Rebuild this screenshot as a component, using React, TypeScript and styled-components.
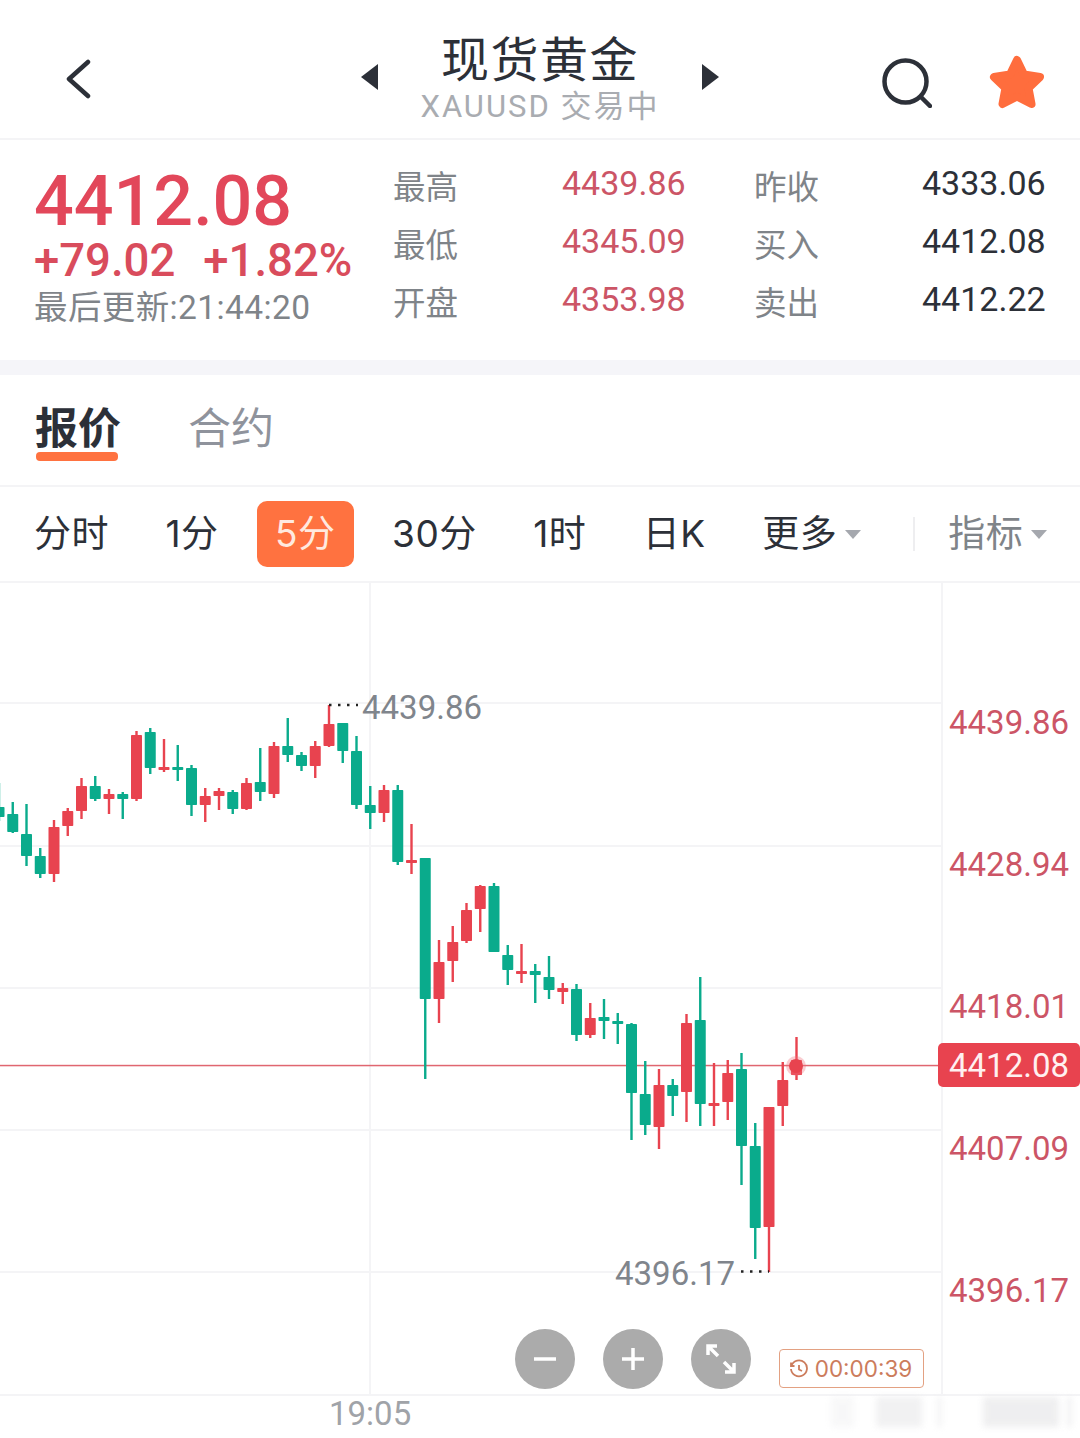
import React from 'react';
import styled, { createGlobalStyle } from 'styled-components';

const RED = '#e8434f';
const GREEN = '#0aab8c';
const ORANGE = '#ff7240';
const LINE = '#f4f4f6';
const FONT = `Roboto, "Noto Sans CJK SC", sans-serif`;
const ROUND_FONT = `Inter, "Noto Sans CJK SC", sans-serif`;

const STEP = 13.75;

// color, wick top, wick bottom, body top, body bottom (page y)
const candles: [string, number, number, number, number][] = [
	['g', 783, 821, 807, 817],
	['g', 802, 833, 814, 832],
	['g', 804, 866, 834, 856],
	['g', 848, 878, 856, 874],
	['r', 820, 882, 827, 874],
	['r', 808, 836, 811, 826],
	['r', 778, 819, 786, 811],
	['g', 776, 801, 786, 799],
	['r', 789, 814, 794, 799],
	['g', 792, 819, 794, 799],
	['r', 731, 801, 735, 799],
	['g', 728, 774, 732, 768],
	['r', 739, 772, 767, 770],
	['g', 745, 781, 767, 770],
	['g', 765, 816, 768, 805],
	['r', 788, 822, 796, 805],
	['r', 788, 810, 791, 796],
	['g', 790, 814, 792, 809],
	['r', 778, 810, 783, 809],
	['g', 748, 801, 782, 792],
	['r', 742, 798, 746, 794],
	['g', 718, 762, 746, 755],
	['g', 752, 771, 755, 766],
	['r', 741, 778, 746, 766],
	['r', 705, 747, 724, 746],
	['g', 723, 763, 723, 751],
	['g', 736, 809, 751, 805],
	['g', 786, 829, 805, 813],
	['r', 785, 822, 790, 813],
	['g', 785, 865, 790, 862],
	['r', 824, 874, 860, 863],
	['g', 858, 1079, 858, 999],
	['r', 940, 1023, 962, 999],
	['r', 926, 982, 942, 961],
	['r', 903, 943, 910, 941],
	['r', 885, 932, 886, 909],
	['g', 883, 952, 886, 952],
	['g', 945, 985, 955, 970],
	['r', 944, 983, 971, 973],
	['g', 964, 1003, 971, 975],
	['g', 956, 999, 977, 990],
	['r', 983, 1004, 988, 992],
	['g', 984, 1041, 989, 1035],
	['r', 1003, 1038, 1018, 1035],
	['g', 999, 1039, 1017, 1021],
	['g', 1013, 1044, 1021, 1024],
	['g', 1023, 1140, 1024, 1093],
	['g', 1061, 1135, 1094, 1125],
	['r', 1069, 1149, 1085, 1127],
	['g', 1079, 1116, 1085, 1096],
	['r', 1014, 1122, 1023, 1092],
	['g', 977, 1126, 1020, 1104],
	['r', 1063, 1126, 1103, 1106],
	['r', 1060, 1120, 1073, 1102],
	['g', 1053, 1185, 1069, 1146],
	['g', 1123, 1259, 1146, 1228],
	['r', 1107, 1272, 1107, 1227],
	['r', 1062, 1126, 1080, 1106],
	['r', 1037, 1080, 1060, 1075],
];

const gridRows = [703, 846, 988, 1130, 1272];
const axisPrices = ['4439.86', '4428.94', '4418.01', '4407.09', '4396.17'];

const stats = [
	['最高', '4439.86', '昨收', '4333.06'],
	['最低', '4345.09', '买入', '4412.08'],
	['开盘', '4353.98', '卖出', '4412.22'],
];

const periods = ['分时', '1分', '5分', '30分', '1时', '日K'];

const smudges = [
	{ w: 23, gap: 0, o: 0.3 },
	{ w: 46, gap: 22, o: 0.6 },
	{ w: 5, gap: 15, o: 0.5 },
	{ w: 76, gap: 41, o: 0.7 },
	{ w: 5, gap: 8, o: 0.6 },
];

const Caret = () => (
	<CaretIcon viewBox="0 0 16 10">
		<path d="M0 1h16L8 10z" fill="#a5a8ae" />
	</CaretIcon>
);

const Chart = () => (
	<ChartSvg viewBox="0 583 941 811">
		{gridRows.map((y) => (
			<line key={y} x1={0} x2={941} y1={y} y2={y} stroke={LINE} strokeWidth={2} />
		))}
		<line x1={370} x2={370} y1={583} y2={1394} stroke={LINE} strokeWidth={2} />
		<rect x={0} y={1064.8} width={941} height={1.5} fill="#e06670" />
		{candles.map(([c, wt, wb, bt, bb], i) => {
			const x = -1 + i * STEP;
			const fill = c === 'r' ? RED : GREEN;
			return (
				<g key={i} fill={fill}>
					<rect x={x - 1.2} y={wt} width={2.4} height={wb - wt} />
					<rect x={x - 5.5} y={bt} width={11} height={Math.max(bb - bt, 3)} rx={0.8} />
				</g>
			);
		})}
		<circle cx={796} cy={1066} r={10} fill="#f2707a" opacity={0.35} />
		<circle cx={796} cy={1066} r={7} fill={RED} />
		<line x1={329} x2={358} y1={705} y2={705} stroke="#222" strokeWidth={2.5} strokeDasharray="2.500 6.500" />
		<line x1={741} x2={769} y1={1271.5} y2={1271.5} stroke="#222" strokeWidth={2.5} strokeDasharray="2.500 6.500" />
	</ChartSvg>
);

export default function App() {
	return (
		<Page>
			<GlobalStyle />
			<Header>
				<BackIcon viewBox="0 0 26 40">
					<path d="M23 3 4 20l19 17" />
				</BackIcon>
				<TitleGroup>
					<Arrow viewBox="0 0 17 26">
						<path d="M17 0v26L0 13z" fill="#2c3038" />
					</Arrow>
					<Titles>
						<Title>现货黄金</Title>
						<Subtitle>XAUUSD 交易中</Subtitle>
					</Titles>
					<Arrow viewBox="0 0 17 26">
						<path d="M0 0v26l17-13z" fill="#2c3038" />
					</Arrow>
				</TitleGroup>
				<HeaderIcons>
					<SearchIcon viewBox="0 0 50 50">
						<circle cx="23.5" cy="23.5" r="21" />
						<path d="m39 39 9 9" />
					</SearchIcon>
					<StarIcon viewBox="0 0 56 54">
						<path d="M28 5l7 14.500 16 2.500-11.500 11 3 16L28 41.500 13.500 49l3-16L5 22l16-2.500z" />
					</StarIcon>
				</HeaderIcons>
			</Header>

			<StatsRow>
				<Quote>
					<Price>4412.08</Price>
					<Change>
						<span>+79.02</span>
						<span>+1.82%</span>
					</Change>
					<Updated>最后更新:21:44:20</Updated>
				</Quote>
				<StatsGrid>
					{stats.map(([a, b, c, d]) => (
						<React.Fragment key={a}>
							<StatLabel>{a}</StatLabel>
							<StatValue $red>{b}</StatValue>
							<StatLabel>{c}</StatLabel>
							<StatValue>{d}</StatValue>
						</React.Fragment>
					))}
				</StatsGrid>
			</StatsRow>
			<Band />

			<Tabs>
				<Tab $active>报价</Tab>
				<Tab>合约</Tab>
			</Tabs>

			<Periods>
				{periods.map((p) => (
					<Period key={p} $active={p === '5分'}>
						{p}
					</Period>
				))}
				<Period>
					更多
					<Caret />
				</Period>
				<Separator />
				<Period $muted>
					指标
					<Caret />
				</Period>
			</Periods>

			<ChartArea>
				<Plot>
					<Chart />
					<PeakLabel $x={362} $y={687}>4439.86</PeakLabel>
					<PeakLabel $x={615} $y={1253}>4396.17</PeakLabel>
					<Controls>
						<RoundButton>
							<svg width="26" height="26" viewBox="0 0 26 26">
								<path d="M2 13h22" />
							</svg>
						</RoundButton>
						<RoundButton>
							<svg width="26" height="26" viewBox="0 0 26 26">
								<path d="M2 13h22M13 2v22" />
							</svg>
						</RoundButton>
						<RoundButton>
							<svg width="32" height="32" viewBox="0 0 32 32">
								<path d="M4 4l9 9M19 19l9 9M3 12V3h9M29 20v9h-9" />
							</svg>
						</RoundButton>
					</Controls>
					<Countdown>
						<svg width="20" height="20" viewBox="0 0 20 20">
							<path d="M2.500 6.500A8 8 0 1 1 2 10M2 3.500v3.500h3.500M10 6v4.500l3 1.500" />
						</svg>
						00:00:39
					</Countdown>
				</Plot>
				<Axis>
					{axisPrices.map((p) => (
						<AxisLabel key={p}>{p}</AxisLabel>
					))}
					<PriceTag>4412.08</PriceTag>
				</Axis>
			</ChartArea>

			<Footer>
				<TimeLabel>19:05</TimeLabel>
				<Watermark>
					{smudges.map((s, i) => (
						<Smudge key={i} style={{ width: s.w, marginLeft: s.gap, opacity: s.o }} />
					))}
				</Watermark>
			</Footer>
		</Page>
	);
}

const GlobalStyle = createGlobalStyle`
	html, body {
		margin: 0;
		padding: 0;
		background: #fff;
	}
`;

const Page = styled.div`
	width: 1080px;
	height: 1438px;
	overflow: hidden;
	display: flex;
	flex-direction: column;
	background: #fff;
	font-family: ${FONT};
	color: #2c3038;
`;

const Header = styled.header`
	height: 138px;
	flex: none;
	position: relative;
	display: flex;
	align-items: center;
	justify-content: center;
	border-bottom: 2px solid ${LINE};
`;

const BackIcon = styled.svg`
	position: absolute;
	left: 65px;
	top: 59px;
	width: 26px;
	height: 40px;
	fill: none;
	stroke: #2c3038;
	stroke-width: 4.500;
	stroke-linecap: round;
	stroke-linejoin: round;
`;

const TitleGroup = styled.div`
	display: flex;
	align-items: center;
	gap: 21px;
`;

const Arrow = styled.svg`
	width: 17px;
	height: 26px;
	margin-top: 16px;
`;

const Titles = styled.div`
	width: 282px;
	display: flex;
	flex-direction: column;
	align-items: center;
	padding-top: 16px;
`;

const Title = styled.div`
	font-size: 48px;
	line-height: 60px;
	letter-spacing: 1.500px;
`;

const Subtitle = styled.div`
	font-size: 31px;
	line-height: 34px;
	letter-spacing: 2px;
	margin-top: -1px;
	color: #a9acb1;
`;

const HeaderIcons = styled.div`
	position: absolute;
	left: 882px;
	top: 55px;
	display: flex;
	align-items: flex-start;
	gap: 56px;
`;

const SearchIcon = styled.svg`
	width: 50px;
	height: 50px;
	margin-top: 3px;
	fill: none;
	stroke: #2c3038;
	stroke-width: 4.500;
	stroke-linecap: round;
`;

const StarIcon = styled.svg`
	width: 56px;
	height: 54px;
	margin-left: 1px;
	fill: #ff6d3d;
	stroke: #ff6d3d;
	stroke-width: 8;
	stroke-linejoin: round;
`;

const StatsRow = styled.section`
	height: 220px;
	flex: none;
	display: flex;
`;

const Quote = styled.div`
	width: 393px;
	flex: none;
	padding: 25px 0 0 34px;
	box-sizing: border-box;
	display: flex;
	flex-direction: column;
`;

const Price = styled.div`
	font-size: 70px;
	line-height: 72px;
	font-weight: 500;
	color: #e2475a;
`;

const Change = styled.div`
	display: flex;
	gap: 28px;
	margin-top: 1px;
	font-size: 45.500px;
	line-height: 46px;
	font-weight: 500;
	color: #d94c5c;
`;

const Updated = styled.div`
	font-size: 33.500px;
	line-height: 46px;
	letter-spacing: 0.400px;
	margin-top: 1px;
	color: #7f8489;
	white-space: nowrap;
`;

const StatsGrid = styled.div`
	display: grid;
	grid-template-columns: 169px 192px 168px auto;
	grid-auto-rows: 58px;
	padding-top: 15px;
	align-items: center;
`;

const StatLabel = styled.div`
	font-size: 32.500px;
	color: #7f8489;
`;

const StatValue = styled.div<{ $red?: boolean }>`
	font-size: 34px;
	margin-top: -3px;
	color: ${({ $red }) => ($red ? '#cc5566' : '#2c3038')};
`;

const Band = styled.div`
	height: 15px;
	flex: none;
	background: #f5f5f9;
`;

const Tabs = styled.nav`
	height: 112px;
	flex: none;
	box-sizing: border-box;
	padding: 24px 0 0 35px;
	display: flex;
	align-items: flex-start;
	gap: 67px;
	border-bottom: 2px solid ${LINE};
`;

const Tab = styled.div<{ $active?: boolean }>`
	font-size: 43px;
	line-height: 60px;
	font-weight: ${({ $active }) => ($active ? 700 : 400)};
	color: ${({ $active }) => ($active ? '#2c3038' : '#8f939c')};
	display: flex;
	flex-direction: column;
	&::after {
		content: '';
		display: ${({ $active }) => ($active ? 'block' : 'none')};
		height: 9px;
		margin: -7px 3px 0 1px;
		border-radius: 4px;
		background: ${ORANGE};
	}
`;

const Periods = styled.div`
	height: 96px;
	flex: none;
	box-sizing: border-box;
	padding-left: 34px;
	display: flex;
	align-items: center;
	gap: 56.500px;
	border-bottom: 2px solid ${LINE};
	font-family: ${ROUND_FONT};
`;

const Period = styled.div<{ $active?: boolean; $muted?: boolean }>`
	font-size: 37px;
	line-height: 66px;
	letter-spacing: 0.500px;
	display: flex;
	align-items: center;
	white-space: nowrap;
	color: ${({ $muted }) => ($muted ? '#7f8489' : '#2c3038')};
	${({ $active }) =>
		$active &&
		`
		margin: 0 -18px;
		padding: 0 18px;
		border-radius: 10px;
		background: ${ORANGE};
		color: #ffe9df;
	`}
`;

const CaretIcon = styled.svg`
	width: 16px;
	height: 10px;
	margin-left: 8px;
`;

const Separator = styled.div`
	width: 2px;
	height: 34px;
	margin: 0 -23px 0 -5px;
	background: #eeeef0;
`;

const ChartArea = styled.div`
	height: 811px;
	flex: none;
	display: flex;
	border-bottom: 2px solid ${LINE};
`;

const Plot = styled.div`
	width: 941px;
	flex: none;
	position: relative;
	border-right: 2px solid ${LINE};
`;

const ChartSvg = styled.svg`
	display: block;
	width: 941px;
	height: 811px;
`;

const PeakLabel = styled.div<{ $x: number; $y: number }>`
	position: absolute;
	left: ${({ $x }) => $x}px;
	top: ${({ $y }) => $y - 583}px;
	font-size: 33px;
	line-height: 42px;
	color: #80858c;
`;

const Controls = styled.div`
	position: absolute;
	left: 515px;
	top: 746px;
	display: flex;
	gap: 28px;
`;

const RoundButton = styled.div`
	width: 60px;
	height: 60px;
	border-radius: 50%;
	background: #ababab;
	display: flex;
	align-items: center;
	justify-content: center;
	svg {
		fill: none;
		stroke: #fff;
		stroke-width: 3.500;
	}
`;

const Countdown = styled.div`
	position: absolute;
	left: 779px;
	top: 766px;
	width: 145px;
	height: 39px;
	box-sizing: border-box;
	border: 1.500px solid #e3a182;
	border-radius: 4px;
	display: flex;
	align-items: center;
	justify-content: center;
	gap: 6px;
	padding-right: 2px;
	font-family: ${ROUND_FONT};
	font-size: 22.500px;
	color: #cc7c5c;
	svg {
		fill: none;
		stroke: #cc7c5c;
		stroke-width: 1.800;
	}
`;

const Axis = styled.div`
	flex: 1;
	position: relative;
	padding-top: 68px;
`;

const AxisLabel = styled.div`
	height: 142px;
	display: flex;
	align-items: center;
	padding-left: 6px;
	font-size: 33px;
	color: #cc5566;
`;

const PriceTag = styled.div`
	position: absolute;
	left: -5px;
	top: 460px;
	width: 142px;
	height: 44px;
	border-radius: 5px;
	background: ${RED};
	color: #fff0f0;
	font-size: 33px;
	display: flex;
	align-items: center;
	justify-content: center;
`;

const Footer = styled.footer`
	flex: 1;
	position: relative;
`;

const TimeLabel = styled.div`
	position: absolute;
	left: 329px;
	top: 0;
	font-size: 33px;
	line-height: 36px;
	color: #a0a3a8;
`;

const Watermark = styled.div`
	position: absolute;
	left: 831px;
	top: 1px;
	display: flex;
`;

const Smudge = styled.div`
	height: 30px;
	background: #e8e8ea;
	filter: blur(3px);
`;
